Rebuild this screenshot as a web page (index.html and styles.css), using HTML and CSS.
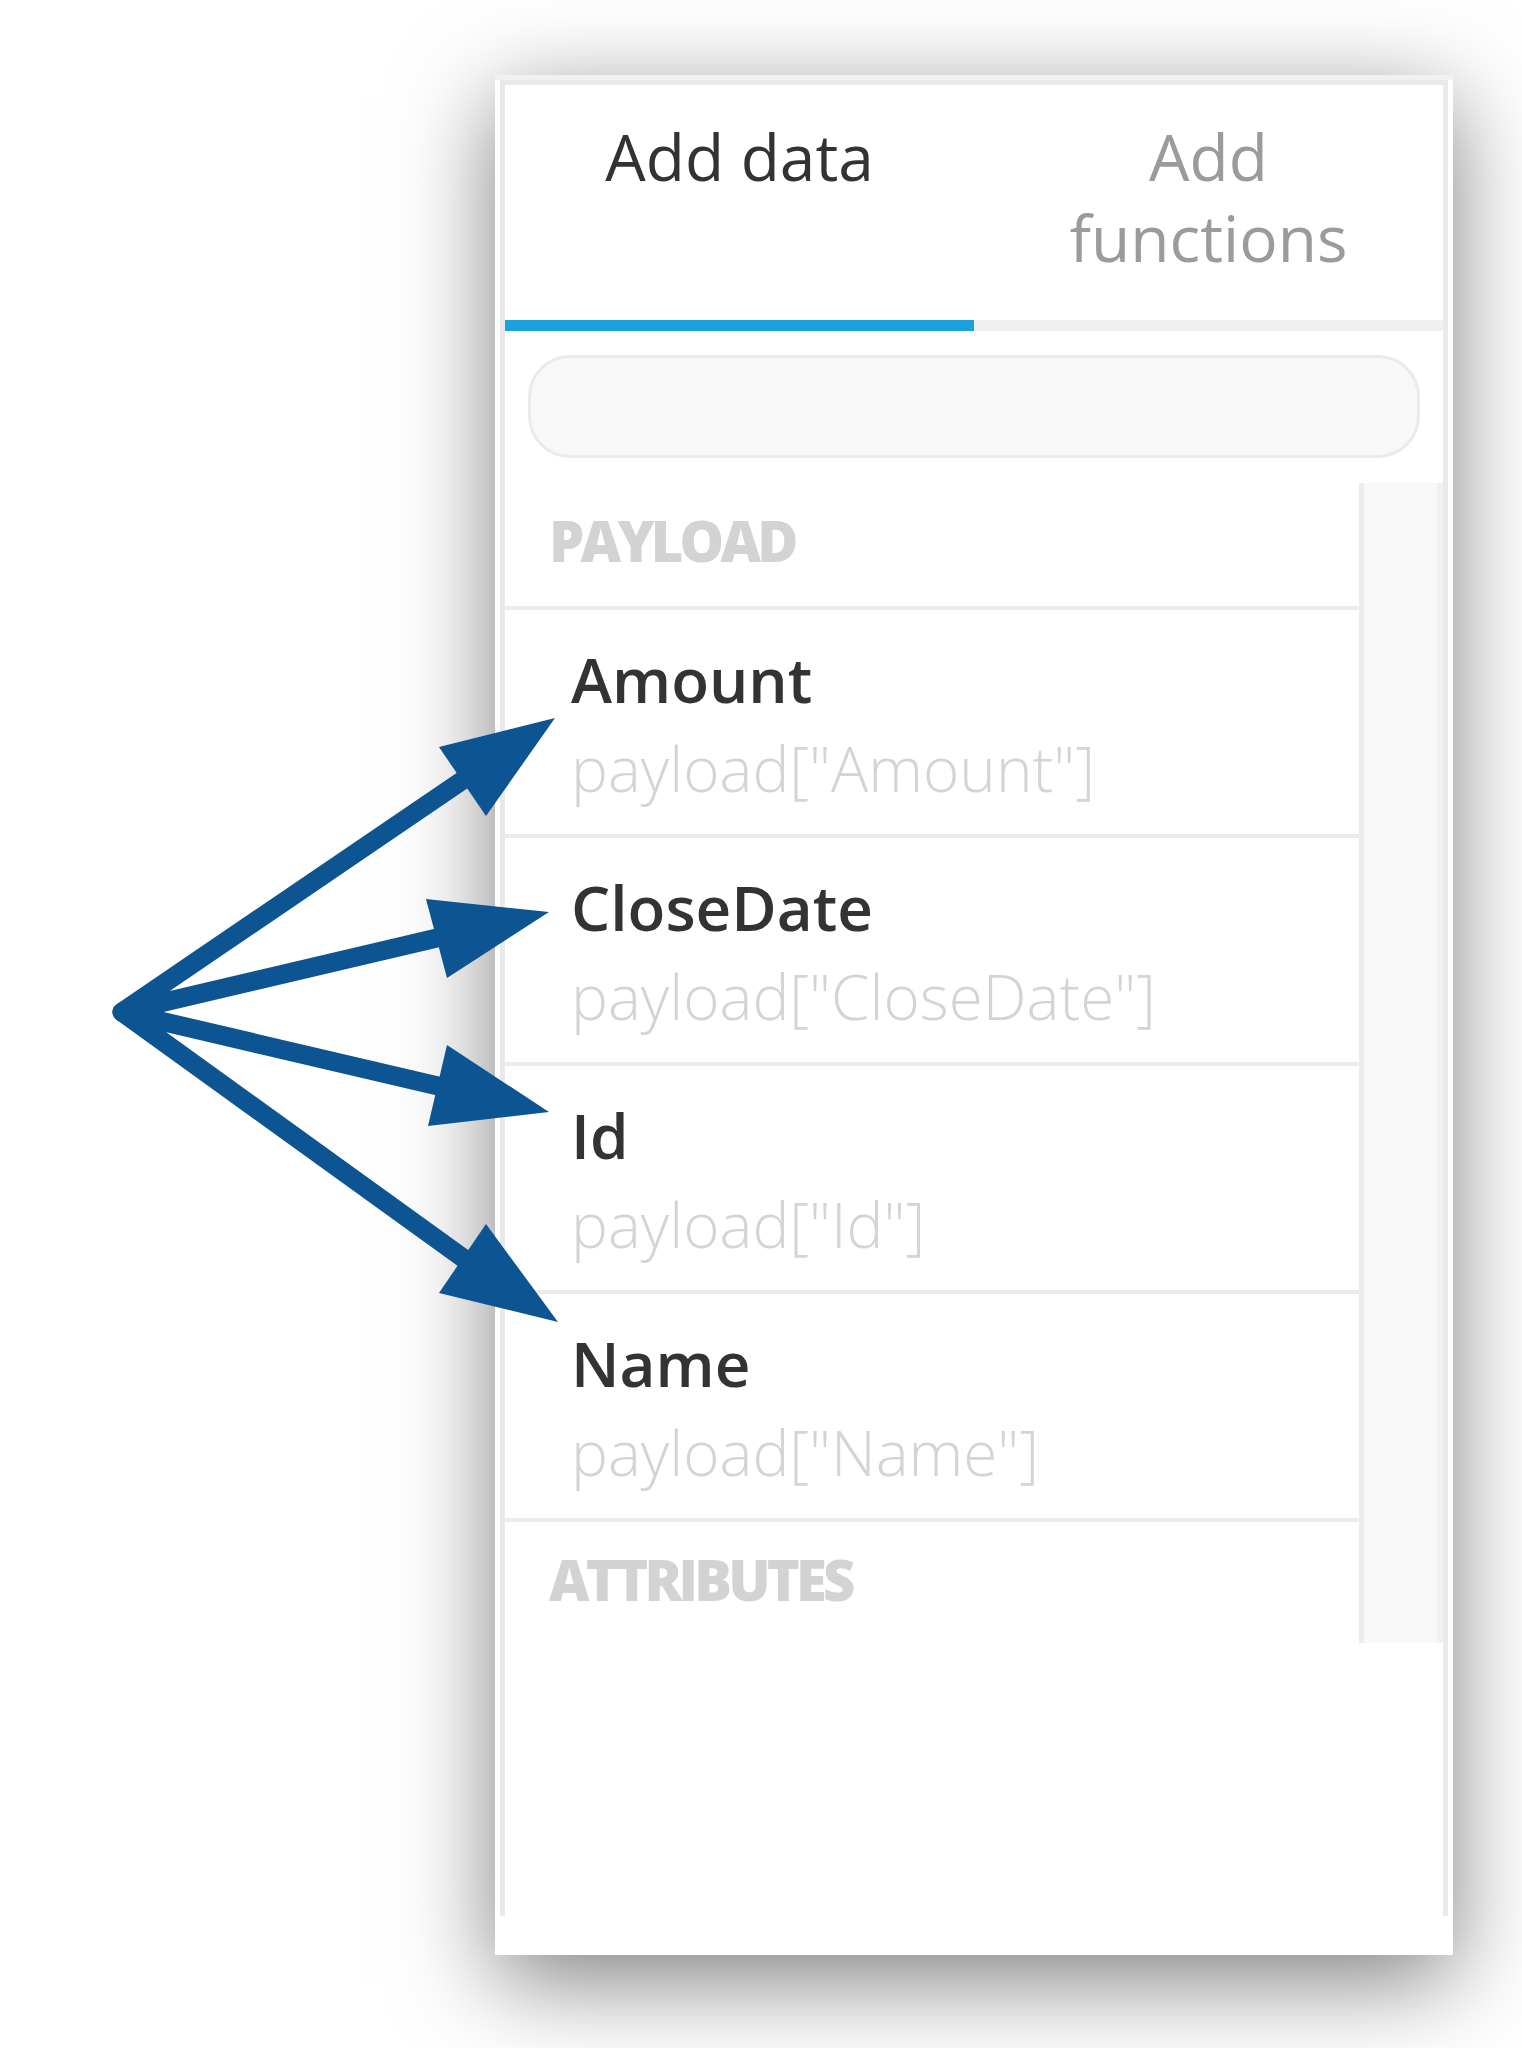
FILE: index.html
```html
<!DOCTYPE html>
<html>
<head>
<meta charset="utf-8">
<link rel="stylesheet" href="styles.css">
</head>
<body>
<div class="stage">
  <div class="card">
    <div class="panel">
      <div class="tabs">
        <div class="tab active">Add data</div>
        <div class="tab">Add<br>functions</div>
      </div>
      <div class="search"></div>
      <div class="list">
        <div class="list-body">
          <div class="group">PAYLOAD</div>
          <div class="item"><div class="name">Amount</div><div class="path">payload["Amount"]</div></div>
          <div class="item"><div class="name">CloseDate</div><div class="path">payload["CloseDate"]</div></div>
          <div class="item"><div class="name">Id</div><div class="path">payload["Id"]</div></div>
          <div class="item"><div class="name">Name</div><div class="path">payload["Name"]</div></div>
          <div class="group sep">ATTRIBUTES</div>
        </div>
        <div class="track"></div>
      </div>
    </div>
  </div>
  <svg class="arrows" width="1522" height="2048" viewBox="0 0 1522 2048">
    <g stroke="#0c5492" stroke-width="19" stroke-linecap="round" stroke-linejoin="round" fill="none">
      <path d="M463 780 L122 1012 L437 938"/>
      <path d="M438 1086 L122 1012 L463 1258"/>
    </g>
    <g fill="#0c5492">
      <polygon points="555,718 439,747 486,816"/>
      <polygon points="549,912 426,899 447,978"/>
      <polygon points="549,1112 447,1045 428,1126"/>
      <polygon points="558,1322 486,1224 439,1293"/>
    </g>
  </svg>
</div>
</body>
</html>
```

FILE: styles.css
```css
html, body {
  margin: 0;
  padding: 0;
  background: #ffffff;
}

.stage {
  position: relative;
  width: 1522px;
  height: 2048px;
  overflow: hidden;
  font-family: "Open Sans", "Noto Sans", sans-serif;
}

.card {
  margin: 75px 0 0 495px;
  width: 958px;
  height: 1880px;
  box-sizing: border-box;
  background: #ffffff;
  border-top: 5px solid #f1f1f1;
  padding: 0 5px 39px 5px;
  display: flex;
  flex-direction: column;
  box-shadow: 0 25px 90px rgba(0, 0, 0, 0.5);
}

.panel {
  flex: 1;
  display: flex;
  flex-direction: column;
  border: 5px solid #e9e9ea;
  border-bottom: 0;
  min-height: 0;
}

.tabs {
  display: flex;
}

.tab {
  flex: 1;
  text-align: center;
  font-size: 64px;
  line-height: 81px;
  font-weight: 400;
  color: #9b9b9b;
  padding: 31px 0 42px;
  border-bottom: 11px solid #f0f0f0;
}

.tab.active {
  color: #333333;
  border-bottom-color: #1ba1dd;
}

.search {
  margin: 24px 23px 25px;
  height: 103px;
  box-sizing: border-box;
  border: 3px solid #ebebeb;
  border-radius: 42px;
  background: #f8f8f9;
}

.list {
  height: 1160px;
  display: flex;
  overflow: hidden;
}

.list-body {
  flex: 1;
}

.track {
  width: 84px;
  box-sizing: border-box;
  background: #f8f8f8;
  border-left: 5px solid #ececec;
  border-right: 6px solid #f0f0f0;
}

.group {
  padding: 24px 0 32px 44px;
  font-size: 56px;
  line-height: 67px;
  font-weight: 800;
  letter-spacing: -3.8px;
  color: #d3d3d5;
}

.sep,
.item {
  border-top: 4px solid #ebebeb;
}

.item {
  padding: 29px 0 26px 66px;
}

.name {
  font-size: 62px;
  line-height: 80px;
  font-weight: 600;
  color: #333333;
}

.path {
  margin-top: 9px;
  font-size: 62px;
  line-height: 80px;
  font-weight: 300;
  color: #d4d4d6;
}

.arrows {
  position: absolute;
  left: 0;
  top: 0;
  pointer-events: none;
}
```
